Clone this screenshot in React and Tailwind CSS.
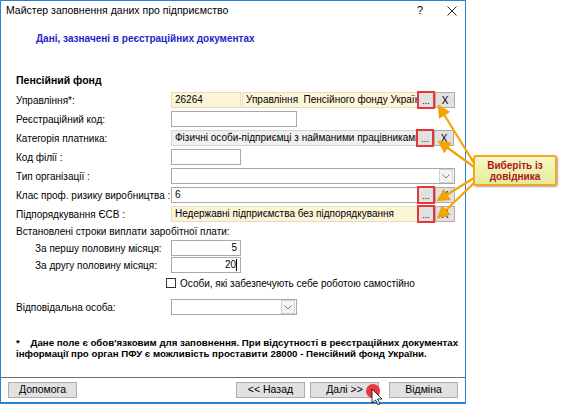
import React from 'react';

const font = "font-['Liberation_Sans',sans-serif]";

const Field = ({ w, bg = 'bg-white', border = 'border-[#a9a9a9]', children, right = false }) => (
  <div
    className={`h-[16px] ${w} ${bg} border ${border} flex items-center px-[3px] text-[10px] leading-none text-black overflow-hidden whitespace-nowrap ${right ? 'justify-end' : ''}`}
  >
    {children}
  </div>
);

const DotsBtn = () => (
  <div className="relative w-[16px] h-[16px] bg-[#e1e1e1] border border-[#adadad] flex items-end justify-center text-[9px] leading-[12px] text-black">
    ...
    <div className="absolute -inset-[2px] border-2 border-[#e8353a]" />
  </div>
);

const XBtn = () => (
  <div className="w-[20px] h-[16px] bg-[#e1e1e1] border border-[#adadad] flex items-center justify-center text-[10px] text-black">
    X
  </div>
);

const Chevron = () => (
  <div className="w-[14px] h-[14px] border border-[#d0d0d0] bg-[#f4f4f4] flex items-center justify-center">
    <svg width="8" height="5" viewBox="0 0 8 5">
      <path d="M0.5 0.5 L4 4 L7.5 0.5" stroke="#7a7a7a" fill="none" strokeWidth="1" />
    </svg>
  </div>
);

const Row = ({ label, indent = false, className = '', children }) => (
  <div className={`flex items-center h-[16px] ${className}`}>
    <div className={`w-[155px] shrink-0 text-[10px] text-black whitespace-nowrap ${indent ? 'pl-[19px]' : ''}`}>{label}</div>
    <div className="flex items-center">{children}</div>
  </div>
);

const WinBtn = ({ children }) => (
  <div className="h-[16px] w-[69px] bg-[#e1e1e1] border border-[#adadad] flex items-center justify-center text-[10.5px] text-black">
    {children}
  </div>
);

export default function App() {
  return (
    <div className={`relative w-[564px] h-[405px] bg-white overflow-hidden ${font}`}>
      <div className="w-[466px] h-[404px] border border-[#2b7fd4] border-b-2 flex flex-col bg-white">
        {/* title bar */}
        <div className="h-[19px] flex items-center pl-[5px] pr-[8px] text-[10.5px] text-black">
          <span className="flex-1">Майстер заповнення даних про підприємство</span>
          <span className="w-[10px] text-center mr-[22px] text-[11px]">?</span>
          <svg width="10" height="10" viewBox="0 0 10 10">
            <path d="M0.5 0.5 L9.5 9.5 M9.5 0.5 L0.5 9.5" stroke="#222" strokeWidth="1" />
          </svg>
        </div>

        <div className="pl-[35px] pt-[12px] text-[10px] leading-[14px] font-bold text-[#2424c8]">
          Дані, зазначені в реєстраційних документах
        </div>

        <div className="pl-[15px] pt-[27px] text-[10.5px] leading-[14px] font-bold text-black">Пенсійний фонд</div>

        <div className="pl-[15px] pt-[5px] flex flex-col">
          <div className="flex flex-col gap-[3px]">
            <Row label="Управління*:">
              <Field w="w-[70px]" bg="bg-[#fdf5d8]" border="border-[#e3dcc0]">26264</Field>
              <div className="w-[1px]" />
              <Field w="w-[176px]" bg="bg-[#fdf5d8]" border="border-[#e3dcc0]">Управління&nbsp; Пенсійного фонду України</Field>
              <DotsBtn />
              <div className="w-[1px]" />
              <XBtn />
            </Row>
            <Row label="Реєстраційний код:">
              <Field w="w-[126px]" />
            </Row>
            <Row label="Категорія платника:">
              <Field w="w-[246px]" bg="bg-[#f0f0f0]" border="border-[#d4d4d4]">Фізичні особи-підприємці з найманими працівниками</Field>
              <DotsBtn />
              <div className="w-[1px]" />
              <XBtn />
            </Row>
            <Row label="Код філії :">
              <Field w="w-[70px]" />
            </Row>
            <Row label="Тип організації :">
              <div className="h-[16px] w-[284px] border border-[#a9a9a9] bg-white flex items-center justify-end pr-[1px]">
                <Chevron />
              </div>
            </Row>
            <Row label="Клас проф. ризику виробництва :">
              <Field w="w-[247px]">6</Field>
              <DotsBtn />
              <div className="w-[1px]" />
              <XBtn />
            </Row>
            <Row label="Підпорядкування ЄСВ :">
              <Field w="w-[247px]" bg="bg-[#fdf5d8]" border="border-[#e3dcc0]">Недержавні підприємства без підпорядкування</Field>
              <DotsBtn />
              <div className="w-[1px]" />
              <XBtn />
            </Row>
          </div>

          <div className="mt-[1px] h-[16px] flex items-center text-[10px] text-black">Встановлені строки виплати заробітної плати:</div>
          <Row label="За першу половину місяця:" indent className="mt-[1px]">
            <Field w="w-[70px]" right>5</Field>
          </Row>
          <Row label="За другу половину місяця:" indent className="mt-[1px]">
            <Field w="w-[70px]" right>
              20<span className="w-[1px] h-[12px] bg-black" />
            </Field>
          </Row>
          <div className="mt-[2px] h-[16px] flex items-center pl-[150px] text-[10px] text-black">
            <div className="w-[10px] h-[10px] border border-[#333] bg-white mr-[4px]" />
            Особи, які забезпечують себе роботою самостійно
          </div>
          <Row label="Відповідальна особа:" className="mt-[8px]">
            <div className="h-[16px] w-[126px] border border-[#a9a9a9] bg-white flex items-center justify-end pr-[1px]">
              <Chevron />
            </div>
          </Row>
        </div>

        <div className="pl-[15px] pr-[6px] pt-[22px] text-[9.7px] leading-[11px] font-bold text-black">
          <div className="whitespace-nowrap">*&nbsp;&nbsp;&nbsp;&nbsp;Дане поле є обов'язковим для заповнення. При відсутності в реєстраційних документах</div>
          <div className="whitespace-nowrap">інформації про орган ПФУ є можливість проставити 28000 - Пенсійний фонд України.</div>
        </div>

        <div className="flex-1" />
        <div className="border-t border-[#6f6f6f] h-[25px] flex items-center px-[7px]">
          <WinBtn>Допомога</WinBtn>
          <div className="flex-1" />
          <div className="flex gap-[5px]">
            <WinBtn>&lt;&lt; Назад</WinBtn>
            <WinBtn>Далі &gt;&gt;</WinBtn>
          </div>
          <div className="w-[10px]" />
          <WinBtn>Відміна</WinBtn>
        </div>
      </div>

      {/* annotation arrows */}
      <svg className="absolute inset-0 pointer-events-none" width="564" height="405">
        <defs>
          <marker id="ah" markerWidth="6" markerHeight="6" refX="4" refY="3" orient="auto">
            <path d="M0 0 L6 3 L0 6 Z" fill="#f5a300" />
          </marker>
        </defs>
        <g stroke="#f5a300" strokeWidth="2.2" fill="none" markerEnd="url(#ah)">
          <line x1="474" y1="163" x2="440" y2="108" />
          <line x1="474" y1="167" x2="441" y2="143" />
          <line x1="474" y1="178" x2="440" y2="199" />
          <line x1="474" y1="183" x2="440" y2="216" />
        </g>
        <circle cx="373" cy="391" r="7" fill="#e8383d" />
        <path d="M372 389 L372 403 L375.5 400 L378 405 L380 404 L377.5 399 L382 399 Z" fill="#fff" stroke="#000" strokeWidth="0.8" />
      </svg>

      {/* callout */}
      <div className="absolute left-[473px] top-[155px] w-[84px] h-[31px] rounded-[3px] border-2 border-[#f5a623] bg-gradient-to-b from-[#f6f8c4] to-[#e4ec98] shadow-[1px_1px_2px_rgba(0,0,0,0.35)] flex flex-col items-center justify-center text-[10px] leading-[11px] font-bold text-[#b0132b]">
        <span>Виберіть із</span>
        <span>довідника</span>
      </div>
    </div>
  );
}
